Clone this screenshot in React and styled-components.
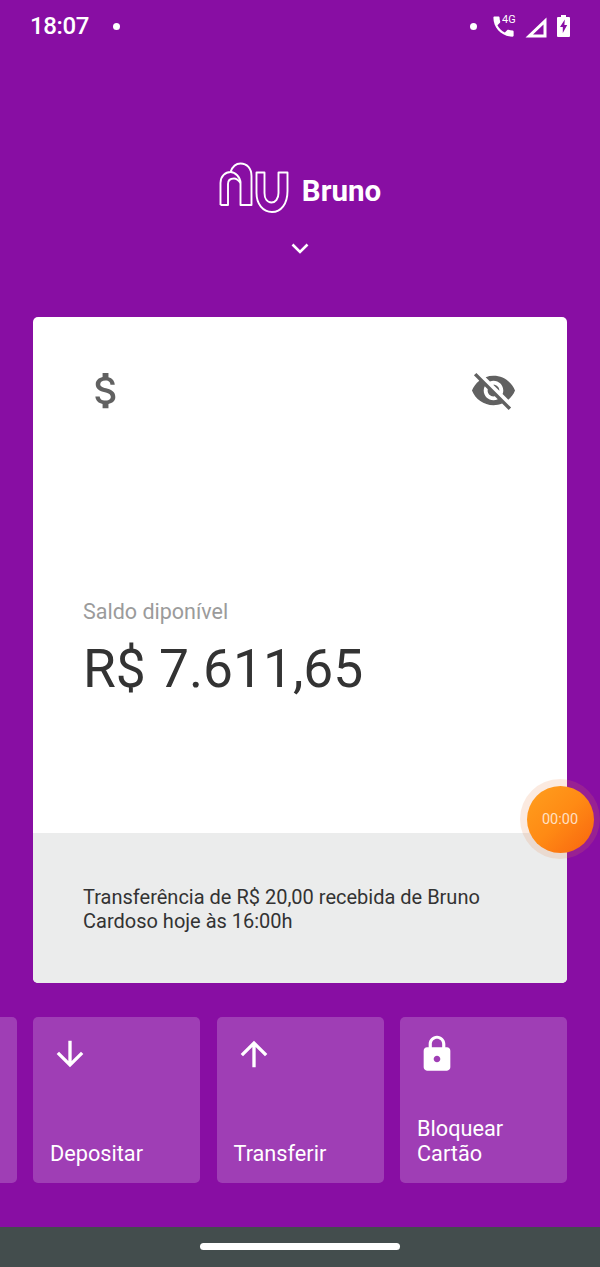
import React from "react";
import styled, { createGlobalStyle } from "styled-components";

const Global = createGlobalStyle`
  html, body { margin: 0; padding: 0; background: #880ea3; }
  * { box-sizing: border-box; }
`;

const Screen = styled.div`
  position: relative;
  width: 600px;
  height: 1267px;
  overflow: hidden;
  display: flex;
  flex-direction: column;
  background: #880ea3;
  font-family: Roboto, "Noto Sans", sans-serif;
  color: #fff;
`;

const StatusBar = styled.header`
  height: 52px;
  display: flex;
  align-items: center;
  padding: 0 0 0 30px;
`;

const Clock = styled.span`
  font-size: 24px;
  font-weight: 500;
  letter-spacing: -0.4px;
  line-height: 52px;
`;

const Dot = styled.i`
  width: 7px;
  height: 7px;
  border-radius: 50%;
  background: #fff;
  margin-left: ${(p) => p.$left}px;
`;

const StatusIcons = styled.div`
  margin-left: auto;
  display: flex;
  align-items: center;
  height: 52px;
  padding-right: 30px;
`;

const CallSlot = styled.div`
  position: relative;
  width: 27px;
  height: 27px;
  margin-left: 13px;
`;

const NetworkTag = styled.span`
  position: absolute;
  left: 12px;
  top: 0;
  font-size: 11.5px;
  line-height: 12px;
  font-weight: 400;
  transform: scaleX(0.95);
  transform-origin: left top;
`;

const Brand = styled.div`
  height: 265px;
  padding-top: 110px;
  display: flex;
  flex-direction: column;
  align-items: center;
`;

const BrandRow = styled.div`
  display: flex;
  align-items: center;
  gap: 13px;
`;

const BrandName = styled.span`
  font-size: 29.5px;
  font-weight: 700;
  padding-top: 6px;
`;

const Chevron = styled.svg`
  display: block;
  margin-top: 29px;
`;

const Card = styled.section`
  width: 534px;
  height: 666px;
  margin: 0 0 0 33px;
  flex: none;
  border-radius: 5px;
  overflow: hidden;
  background: #fff;
  display: flex;
  flex-direction: column;
`;

const CardBody = styled.div`
  flex: 1;
  padding: 50px 50px 0;
`;

const IconRow = styled.div`
  display: flex;
  justify-content: space-between;
`;

const Balance = styled.div`
  margin-top: 186px;
`;

const BalanceLabel = styled.div`
  font-size: 21.5px;
  line-height: 24px;
  color: #9b9b9b;
`;

const BalanceValue = styled.div`
  margin-top: 14px;
  font-size: 53.3px;
  line-height: 62px;
  color: #333;
`;

const CardNote = styled.div`
  height: 150px;
  padding: 52px 50px 0;
  background: #ebecec;
  font-size: 20px;
  line-height: 24px;
  color: #333;
`;

const Actions = styled.div`
  display: flex;
  gap: 16.5px;
  margin: 34px 0 0 -150.5px;
`;

const Action = styled.div`
  width: 167px;
  height: 166px;
  flex: none;
  border-radius: 5px;
  padding: 17px;
  display: flex;
  flex-direction: column;
  justify-content: space-between;
  background: rgba(255, 255, 255, 0.2);
`;

const ActionLabel = styled.span`
  font-size: 21.7px;
  line-height: 25px;
  white-space: pre-line;
`;

const NavBar = styled.footer`
  margin-top: auto;
  height: 40px;
  display: flex;
  justify-content: center;
  padding-top: 16px;
  background: #434d4d;
`;

const HomePill = styled.div`
  width: 200px;
  height: 7px;
  border-radius: 4px;
  background: #fff;
`;

const TimerHalo = styled.div`
  position: absolute;
  left: 520px;
  top: 779px;
  width: 80px;
  height: 80px;
  border-radius: 50%;
  display: flex;
  align-items: center;
  justify-content: center;
  background: rgba(230, 130, 70, 0.17);
`;

const TimerButton = styled.div`
  width: 67px;
  height: 67px;
  border-radius: 50%;
  display: flex;
  align-items: center;
  justify-content: center;
  background: linear-gradient(135deg, #ff9f1e 0%, #ff8a14 50%, #f8640f 100%);
  color: rgba(255, 255, 255, 0.75);
  font-size: 14.5px;
`;

const Icon = ({ d, size, fill = "#fff" }) => (
  <svg width={size} height={size} viewBox="0 0 24 24" style={{ display: "block" }}>
    <path d={d} fill={fill} />
  </svg>
);

const paths = {
  call: "M6.62 10.79c1.44 2.83 3.76 5.14 6.59 6.59l2.2-2.2c.27-.27.67-.36 1.02-.24 1.12.37 2.33.57 3.57.57.55 0 1 .45 1 1V20c0 .55-.45 1-1 1-9.39 0-17-7.61-17-17 0-.55.45-1 1-1h3.5c.55 0 1 .45 1 1 0 1.25.2 2.45.57 3.57.11.35.03.74-.25 1.02l-2.2 2.2z",
  money: "M11.8 10.9c-2.27-.59-3-1.2-3-2.15 0-1.09 1.01-1.85 2.7-1.85 1.78 0 2.44.85 2.5 2.1h2.21c-.07-1.72-1.12-3.3-3.21-3.81V3h-3v2.16c-1.94.42-3.5 1.68-3.5 3.61 0 2.31 1.91 3.46 4.7 4.13 2.5.6 3 1.48 3 2.41 0 .69-.49 1.79-2.7 1.79-2.06 0-2.87-.92-2.98-2.1h-2.2c.12 2.19 1.76 3.42 3.68 3.83V21h3v-2.15c1.95-.37 3.5-1.5 3.5-3.55 0-2.84-2.43-3.81-4.7-4.4z",
  hidden: "M12 7c2.76 0 5 2.24 5 5 0 .65-.13 1.26-.36 1.83l2.92 2.92c1.51-1.26 2.7-2.89 3.43-4.75-1.73-4.39-6-7.5-11-7.5-1.4 0-2.74.25-3.98.7l2.16 2.16C10.74 7.13 11.35 7 12 7zM2 4.27l2.28 2.28.46.46C3.08 8.3 1.78 10.02 1 12c1.73 4.39 6 7.5 11 7.5 1.55 0 3.03-.3 4.38-.84l.42.42L19.73 22 21 20.73 3.27 3 2 4.27zM7.53 9.8l1.55 1.55c-.05.21-.08.43-.08.65 0 1.66 1.34 3 3 3 .22 0 .44-.03.65-.08l1.55 1.55c-.67.33-1.41.53-2.2.53-2.76 0-5-2.24-5-5 0-.79.2-1.53.53-2.2zm4.31-.78l3.15 3.15.02-.16c0-1.66-1.34-3-3-3l-.17.01z",
  down: "M20 12l-1.41-1.41L13 16.17V4h-2v12.17l-5.58-5.59L4 12l8 8 8-8z",
  up: "M4 12l1.41 1.41L11 7.83V20h2V7.83l5.58 5.59L20 12l-8-8-8 8z",
  lock: "M18 8h-1V6c0-2.76-2.24-5-5-5S7 3.24 7 6v2H6c-1.1 0-2 .9-2 2v10c0 1.1.9 2 2 2h12c1.1 0 2-.9 2-2V10c0-1.1-.9-2-2-2zm-6 9c-1.1 0-2-.9-2-2s.9-2 2-2 2 .9 2 2-.9 2-2 2zm3.1-9H8.9V6c0-1.71 1.39-3.1 3.1-3.1 1.71 0 3.1 1.39 3.1 3.1v2z",
};

const SignalIcon = () => (
  <svg width="22" height="21" viewBox="0 0 22 21" style={{ display: "block", marginLeft: 8, marginTop: 2 }}>
    <path d="M0.5 20.5 L21.5 0.5 V20.5 Z M8 17.5 H18.5 V7.5 Z" fill="#fff" fillRule="evenodd" />
  </svg>
);

const BatteryIcon = () => (
  <svg width="13" height="22" viewBox="0 0 13 22" style={{ display: "block", marginLeft: 10 }}>
    <path d="M4 0h5v2h3a1 1 0 0 1 1 1v18a1 1 0 0 1-1 1H1a1 1 0 0 1-1-1V3a1 1 0 0 1 1-1h3z" fill="#fff" />
    <path d="M7.8 4.5 L3 12 H5.8 V18 L10.2 10 H7.4 Z" fill="#880ea3" />
  </svg>
);

const NuLogo = () => (
  <svg width="70" height="52" viewBox="0 0 70 52" fill="none" stroke="#fff" strokeWidth="1.9" strokeLinejoin="round">
    <path d="M1.5 43 V21 C1.5 14 6.5 10 11.5 10 C13.5 4.5 17 1.5 21.5 1.5 C28 1.5 32.5 6.5 32.5 14 V43 H21.5 V21 C21.5 15 16 10 11.5 10" />
    <path d="M1.5 43 H9 V22 C9 18.5 11.5 16.5 15 16.5 C17 16.5 19 17.5 21.5 21" />
    <path d="M37.5 10.5 H45.5 V31 C45.5 36.5 48 40.5 52.5 40.5 C56.5 40.5 59.5 36.5 59.5 31 V10.5 H68.5 V29 C68.5 42 62 50 53 50 C44 50 37.5 42 37.5 31 Z" />
  </svg>
);

export default function App() {
  return (
    <Screen>
      <Global />
      <StatusBar>
        <Clock>18:07</Clock>
        <Dot $left={24} />
        <StatusIcons>
          <Dot $left={0} />
          <CallSlot>
            <Icon d={paths.call} size={27} />
            <NetworkTag>4G</NetworkTag>
          </CallSlot>
          <SignalIcon />
          <BatteryIcon />
        </StatusIcons>
      </StatusBar>

      <Brand>
        <BrandRow>
          <NuLogo />
          <BrandName>Bruno</BrandName>
        </BrandRow>
        <Chevron width="18" height="11" viewBox="0 0 18 11" fill="none">
          <path d="M1.5 1.5 L9 9 L16.5 1.5" stroke="#fff" strokeWidth="2.6" />
        </Chevron>
      </Brand>

      <Card>
        <CardBody>
          <IconRow>
            <Icon d={paths.money} size={47} fill="#616161" />
            <Icon d={paths.hidden} size={47} fill="#616161" />
          </IconRow>
          <Balance>
            <BalanceLabel>Saldo diponível</BalanceLabel>
            <BalanceValue>R$ 7.611,65</BalanceValue>
          </Balance>
        </CardBody>
        <CardNote>
          Transferência de R$ 20,00 recebida de Bruno
          <br />
          Cardoso hoje às 16:00h
        </CardNote>
      </Card>

      <Actions>
        <Action />
        <Action>
          <Icon d={paths.down} size={40} />
          <ActionLabel>Depositar</ActionLabel>
        </Action>
        <Action>
          <Icon d={paths.up} size={40} />
          <ActionLabel>Transferir</ActionLabel>
        </Action>
        <Action>
          <Icon d={paths.lock} size={40} />
          <ActionLabel>{"Bloquear\nCartão"}</ActionLabel>
        </Action>
      </Actions>

      <NavBar>
        <HomePill />
      </NavBar>

      <TimerHalo>
        <TimerButton>00:00</TimerButton>
      </TimerHalo>
    </Screen>
  );
}
